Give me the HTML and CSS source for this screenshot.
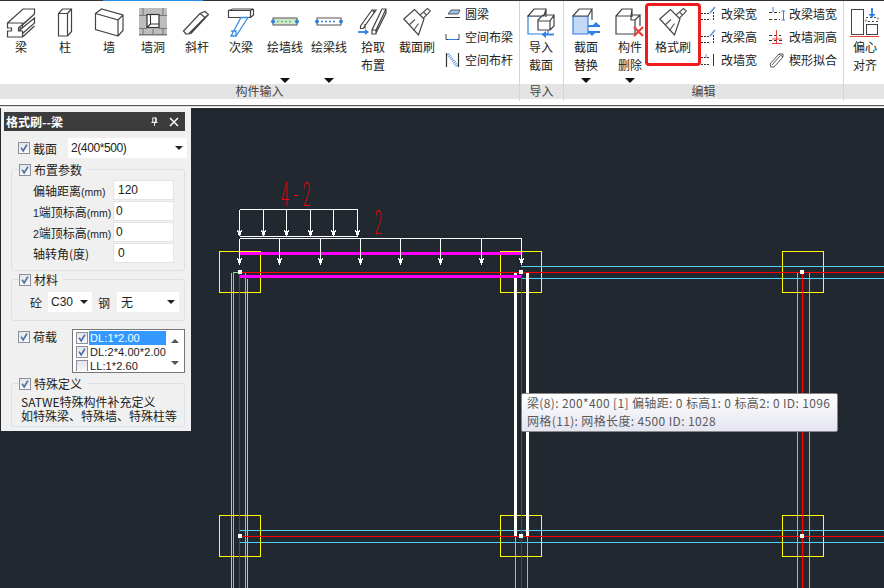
FILE: index.html
```html
<!DOCTYPE html>
<html lang="zh-CN">
<head>
<meta charset="utf-8">
<title>格式刷</title>
<link rel="stylesheet" href="styles.css">
</head>
<body>
<svg class="defs" width="0" height="0">
  <symbol id="brush" viewBox="0 0 28 28">
    <path d="M.8 11 11.500 1.500 21 11l-5.500 16z" fill="#fff" stroke="#444" stroke-width="1.200"/>
    <path d="M6 17 12 11.500M10.500 22.500l5-7M17 7l3.500-3 3 3-3 3M20.500 4l4-3.500 3 2.500-4 4" fill="none" stroke="#555" stroke-width="1.200"/>
  </symbol>
  <symbol id="check" viewBox="0 0 12 12">
    <path d="M2.500 5.500 5 9.500 9.500 2" fill="none" stroke="#4d6fa5" stroke-width="2"/>
  </symbol>
</svg>
<div class="app">
  <div class="topline"><span class="topline-blue"></span></div>
  <div class="ribbon">
    <section class="group g-input">
      <div class="tools">
        <div class="tool">
          <svg class="ic" viewBox="0 0 32 32"><path d="M2.500 17h15v5h-4v3h4v6h-15v-6h4v-3h-4zM2.500 17 18 3h11.500v5L17.500 19M29.500 8 13.500 22M13.500 25 29.500 12v5L17.500 27.500M17.500 31 29.500 20" fill="#fff" stroke="#444" stroke-width="1.200"/></svg>
          <span>梁</span>
        </div>
        <div class="tool">
          <svg class="ic" viewBox="0 0 32 32"><path d="M9.500 7.500h9v22.500h-9zM9.500 7.500l4-4.500h9v22.500l-4 4.500M18.500 7.500l4-4.500" fill="#fff" stroke="#444" stroke-width="1.200"/></svg>
          <span>柱</span>
        </div>
        <div class="tool">
          <svg class="ic" viewBox="0 0 32 32"><path d="M2.500 7.500 25 14v16L2.500 23.500zM2.500 7.500 8.500 3 30 9v15.500L25 30M25 14l5-5" fill="#fff" stroke="#444" stroke-width="1.200"/></svg>
          <span>墙</span>
        </div>
        <div class="tool">
          <svg class="ic" viewBox="0 0 32 32"><rect x="2" y="2" width="28" height="28" fill="#bdbdbd"/><path d="M2 9.500h8M22 9.500h8M2 22.500h8M22 22.500h8M2 28.500h28M6 2v7M26 2v7M6 23v6M16 23v6M26 23v6" stroke="#777" stroke-width="1"/><rect x="10" y="8.500" width="12" height="13" fill="#fff" stroke="#333" stroke-width="1.200"/><path d="M13.500 8.500v9.500h8.500M10 21.500l3.500-3.500" fill="none" stroke="#333" stroke-width="1.100"/></svg>
          <span>墙洞</span>
        </div>
        <div class="tool">
          <svg class="ic" viewBox="0 0 32 32"><path d="M2.500 25 19 7.500l5-2 3.500 3-17.500 19-5 .5zM19 7.500l5 4 3.500-3M24 11.500 7.500 28" fill="#fff" stroke="#444" stroke-width="1.200"/></svg>
          <span>斜杆</span>
        </div>
        <div class="tool">
          <svg class="ic" viewBox="0 0 32 32"><path d="M3.500 4.500h22v7h-22zM25.500 4.500l3-1.500H8l-4.500 1.500M28.500 3v6l-3 2.500" fill="#fff" stroke="#444" stroke-width="1.200"/><path d="M16 11.500h7L11 30H6zM6 25h5v5" fill="#fff" stroke="#3a8eea" stroke-width="1.300"/></svg>
          <span>次梁</span>
        </div>
        <div class="tool">
          <svg class="ic" viewBox="0 0 32 32"><rect x="4" y="12" width="24" height="7" fill="#cfe9cf" stroke="#555"/><path d="M8 15.500h16" stroke="#6fbf6f" stroke-width="1.500" stroke-dasharray="2 2"/><circle cx="4" cy="15.500" r="2" fill="#2f7fe6"/><circle cx="28" cy="15.500" r="2" fill="#2f7fe6"/></svg>
          <span>绘墙线</span>
          <i class="drop"></i>
        </div>
        <div class="tool">
          <svg class="ic" viewBox="0 0 32 32"><rect x="4" y="12" width="24" height="7" fill="#fff" stroke="#555"/><path d="M8 15.500h16" stroke="#2f7fe6" stroke-width="1.500" stroke-dasharray="2 2"/><circle cx="4" cy="15.500" r="2" fill="#2f7fe6"/><circle cx="28" cy="15.500" r="2" fill="#2f7fe6"/></svg>
          <span>绘梁线</span>
          <i class="drop"></i>
        </div>
        <div class="tool tall">
          <svg class="ic" viewBox="0 0 32 32"><path d="M3.500 20 15 4h4L6 22.500H3.500zM15 4l3 3M8 22.500V18M19 27l10-20V3h-4L15 24v4h4zM15 24h4v4M19 24 29 3" fill="#fff" stroke="#444" stroke-width="1.200"/><path d="M1 26h9" stroke="#2f7fe6" stroke-width="1.800"/><path d="M8 23l4 3-4 3z" fill="#2f7fe6"/></svg>
          <span>拾取<br>布置</span>
        </div>
        <div class="tool">
          <svg class="ic brush" viewBox="0 0 28 28"><use href="#brush"/></svg>
          <span>截面刷</span>
        </div>
        <div class="smalls s1">
          <div class="small"><svg viewBox="0 0 16 12"><path d="M3 6 6 2h9l-2 4z" fill="#9fc4ea" stroke="#555"/><path d="M0 9.500h15" stroke="#333"/></svg><span>圆梁</span></div>
          <div class="small"><svg viewBox="0 0 16 12"><path d="M1 3v5.500h13V3" fill="none" stroke="#444"/><path d="M3 8.500h9" stroke="#2f7fe6"/></svg><span>空间布梁</span></div>
          <div class="small"><svg viewBox="0 0 16 16"><path d="M1.500 1v14M13.500 1v14" stroke="#333" stroke-width="1.200"/><path d="M3 2l9 12" stroke="#5a94e0" stroke-width="3" stroke-dasharray="1 1"/></svg><span>空间布杆</span></div>
        </div>
      </div>
      <div class="band">构件输入</div>
    </section>
    <section class="group g-import">
      <div class="tools">
        <div class="tool tall">
          <svg class="ic" viewBox="0 0 32 32"><path d="M3 10h17v3l3 0v15H3z" fill="#fff" stroke="#2f7fe6" stroke-width="1.200"/><path d="M3 10 9 3h12l-2 7zM21 3v8M13 14l5-5h11l-4 6v9H13zM25 15H13M29 9v11l-4 4" fill="#fff" stroke="#444" stroke-width="1.200"/><path d="M19 28.500h10" stroke="#2f7fe6" stroke-width="1.800"/><path d="M21 25l-4.500 3.500L21 32z" fill="#2f7fe6"/></svg>
          <span>导入<br>截面</span>
        </div>
      </div>
      <div class="band">导入</div>
    </section>
    <section class="group g-edit">
      <div class="tools">
        <div class="tool tall">
          <svg class="ic" viewBox="0 0 32 32"><path d="M3 10h15v18H3z" fill="#c3d9f5" stroke="#2f7fe6" stroke-width="1.200"/><path d="M3 10 9 3h13l-4 7zM22 3v11" fill="#fff" stroke="#444" stroke-width="1.200"/><path d="M18 20h12M18 26h12" stroke="#2f7fe6" stroke-width="1.800"/><path d="M26 16l4 4h-8zM22 30l-4-4h8z" fill="#2f7fe6"/></svg>
          <span>截面<br>替换</span>
          <i class="drop"></i>
        </div>
        <div class="tool tall">
          <svg class="ic" viewBox="0 0 32 32"><path d="M2 10h15v4h4v14H2zM2 10l6-7h10l-1 7M18 3v8M21 14l5-5h-9M26 9v11" fill="#fff" stroke="#444" stroke-width="1.200"/><path d="M20 21l9 9M29 21l-9 9" stroke="#e8413c" stroke-width="2.200"/></svg>
          <span>构件<br>删除</span>
          <i class="drop"></i>
        </div>
        <div class="tool highlight">
          <svg class="ic brush" viewBox="0 0 28 28"><use href="#brush"/></svg>
          <span>格式刷</span>
        </div>
        <div class="smalls s2">
          <div class="small"><svg viewBox="0 0 16 16"><path d="M0 7.500h9M0 13.500h9M12.500 6v9" stroke="#333" stroke-dasharray="2 1"/><path d="M9 7l5-6" stroke="#5a94e0" stroke-width="1.500"/></svg><span>改梁宽</span></div>
          <div class="small"><svg viewBox="0 0 16 16"><path d="M0 7.500h9M0 13.500h9M12.500 6v9" stroke="#333" stroke-dasharray="2 1"/><path d="M9 7l5-6" stroke="#5a94e0" stroke-width="1.500"/></svg><span>改梁高</span></div>
          <div class="small"><svg viewBox="0 0 16 16"><path d="M0 5.500h9M0 12.500h9" stroke="#333" stroke-dasharray="2 1"/><path d="M12.500 2v12" stroke="#333"/><path d="M5 2v4" stroke="#5a94e0"/></svg><span>改墙宽</span></div>
        </div>
        <div class="smalls s3">
          <div class="small"><svg viewBox="0 0 16 16"><path d="M0 6.500h11M0 13.500h11" stroke="#333" stroke-dasharray="3 2"/><path d="M4 1v5M14.500 5v9M12.500 5h4M12.500 14h4" stroke="#3a7fd5"/></svg><span>改梁墙宽</span></div>
          <div class="small"><svg viewBox="0 0 16 16"><path d="M0 6.500h12M0 11.500h14" stroke="#333" stroke-dasharray="3 2"/><path d="M7.500 1v13M3 14.500h10M3 10h10" stroke="#e8413c"/></svg><span>改墙洞高</span></div>
          <div class="small"><svg viewBox="0 0 16 16"><path d="M1 12 10 2h4v3L5 15H2zM10 2l4 3M3 13l8-9" fill="none" stroke="#555"/></svg><span>楔形拟合</span></div>
        </div>
      </div>
      <div class="band">编辑</div>
    </section>
    <section class="group g-more">
      <div class="tools">
        <div class="tool tall">
          <svg class="ic" viewBox="0 0 32 32"><rect x="2.500" y="3.500" width="12" height="25" fill="#fff" stroke="#444"/><rect x="17.500" y="18.500" width="11" height="10" fill="#fff" stroke="#444"/><path d="M17 11.500h12v4H17z" fill="none" stroke="#444" stroke-dasharray="2 2"/><path d="M23 2v8" stroke="#2f7fe6" stroke-width="1.800"/><path d="M19.500 8h7L23 12z" fill="#2f7fe6"/><path d="M1 30.500h29" stroke="#e8413c"/></svg>
          <span>偏心<br>对齐</span>
        </div>
      </div>
      <div class="band"></div>
    </section>
  </div>
  <div class="divider"></div>
  <main class="canvas">
    <svg class="drawing" viewBox="0 108 884 480" width="884" height="480">
      <g class="cad-cyan">
        <path d="M521 266.500H884M521 278.500H884M240 530.500H884M240 542.500H884"/>
        <path d="M233.500 273V588M245.500 273V588M515.500 536V588M527.500 536V588M797.500 272V588M809.500 272V588"/>
      </g>
      <path class="cad-green" d="M231.500 588V273.500Q232 272.500 240 272.500M247.500 279V588"/>
      <g class="cad-yellow">
        <rect x="219.500" y="251.500" width="41" height="41"/><rect x="500.500" y="251.500" width="41" height="41"/><rect x="782.500" y="251.500" width="41" height="41"/>
        <rect x="219.500" y="515.500" width="41" height="41"/><rect x="500.500" y="515.500" width="41" height="41"/><rect x="782.500" y="515.500" width="41" height="41"/>
      </g>
      <g class="cad-white-thick">
        <rect x="514" y="273" width="3" height="264"/><rect x="526" y="273" width="3" height="264"/>
      </g>
      <g class="cad-magenta">
        <rect x="240" y="252" width="281" height="3"/><rect x="240" y="275" width="281" height="3"/>
      </g>
      <path class="cad-red" d="M240 272.500H884M240 536.500H884M239.500 272V588M521.500 272V588"/>
      <path class="cad-red-2" d="M802.500 272V588"/>
      <path class="cad-white" d="M239.500 209.500H357.500M239.500 236.500H357.500M239.500 209.500V232M263.500 209.500V232M286.500 209.500V232M310.500 209.500V232M333.500 209.500V232M357.500 209.500V232M239.500 238.500H521.500M239.500 238.500V262M279.500 238.500V262M320.500 238.500V262M360.500 238.500V262M400.500 238.500V262M440.500 238.500V262M481.500 238.500V262M521.500 238.500V262"/>
      <g class="cad-head">
        <path d="M237 230l2.500 2 2.500-2-1 4-1.500 2-1.500-2z"/><path d="M261 230l2.500 2 2.500-2-1 4-1.500 2-1.500-2z"/><path d="M284 230l2.500 2 2.500-2-1 4-1.500 2-1.500-2z"/><path d="M308 230l2.500 2 2.500-2-1 4-1.500 2-1.500-2z"/><path d="M331 230l2.500 2 2.500-2-1 4-1.500 2-1.500-2z"/><path d="M355 230l2.500 2 2.500-2-1 4-1.500 2-1.500-2z"/>
        <path d="M237 258l2.500 2 2.500-2-1 4-1.500 3-1.500-3z"/><path d="M277 258l2.500 2 2.500-2-1 4-1.500 3-1.500-3z"/><path d="M318 258l2.500 2 2.500-2-1 4-1.500 3-1.500-3z"/><path d="M358 258l2.500 2 2.500-2-1 4-1.500 3-1.500-3z"/><path d="M398 258l2.500 2 2.500-2-1 4-1.500 3-1.500-3z"/><path d="M438 258l2.500 2 2.500-2-1 4-1.500 3-1.500-3z"/><path d="M479 258l2.500 2 2.500-2-1 4-1.500 3-1.500-3z"/><path d="M519 258l2.500 2 2.500-2-1 4-1.500 3-1.500-3z"/>
      </g>
      <g class="cad-node">
        <rect x="238" y="270" width="4" height="4"/><rect x="519" y="270" width="4" height="4"/><rect x="800" y="270" width="4" height="4"/>
        <rect x="238" y="534" width="4" height="4"/><rect x="519" y="534" width="4" height="4"/><rect x="800" y="534" width="4" height="4"/>
      </g>
      <text class="cad-text spaced" transform="translate(281 206) scale(.42 1)">4-2</text>
      <text class="cad-text" transform="translate(374.500 234) scale(.42 1)">2</text>
    </svg>

    <aside class="panel">
      <header class="panel-title">
        <strong>格式刷--梁</strong>
        <svg class="pin" viewBox="0 0 10 10"><path d="M3 1h4v5H3zM1.500 6h7M5 6v4M6 1v5" fill="none" stroke="#fff"/></svg>
        <svg class="close" viewBox="0 0 10 10"><path d="M1 1l8 8M9 1 1 9" stroke="#fff" stroke-width="1.500"/></svg>
      </header>
      <div class="row-section">
        <label class="chk-label"><i class="chk"><svg viewBox="0 0 12 12"><use href="#check"/></svg></i>截面</label>
        <div class="select sel-section">2(400*500)</div>
      </div>
      <div class="box box-layout">
        <label class="chk-label legend"><i class="chk"><svg viewBox="0 0 12 12"><use href="#check"/></svg></i>布置参数</label>
        <div class="field"><span>偏轴距离<small>(mm)</small></span><div class="input first">120</div></div>
        <div class="field"><span><small>1</small>端顶标高<small>(mm)</small></span><div class="input">0</div></div>
        <div class="field"><span><small>2</small>端顶标高<small>(mm)</small></span><div class="input">0</div></div>
        <div class="field"><span>轴转角(度)</span><div class="input first">0</div></div>
      </div>
      <div class="box box-material">
        <label class="chk-label legend"><i class="chk"><svg viewBox="0 0 12 12"><use href="#check"/></svg></i>材料</label>
        <div class="material">
          <span>砼</span><div class="select sel-c">C30</div>
          <span>钢</span><div class="select sel-s">无</div>
        </div>
      </div>
      <div class="row-load">
        <label class="chk-label"><i class="chk"><svg viewBox="0 0 12 12"><use href="#check"/></svg></i>荷载</label>
        <div class="list">
          <div class="list-rows">
            <div class="li sel"><i class="chk mini"><svg viewBox="0 0 12 12"><use href="#check"/></svg></i><span>DL:1*2.00</span></div>
            <div class="li"><i class="chk mini"><svg viewBox="0 0 12 12"><use href="#check"/></svg></i><span>DL:2*4.00*2.00</span></div>
            <div class="li"><i class="chk mini off"></i><span>LL:1*2.60</span></div>
          </div>
          <div class="scroll"><i class="up"></i><i class="down"></i></div>
        </div>
      </div>
      <div class="box box-special">
        <label class="chk-label legend"><i class="chk"><svg viewBox="0 0 12 12"><use href="#check"/></svg></i>特殊定义</label>
        <p>SATWE特殊构件补充定义<br>如特殊梁、特殊墙、特殊柱等</p>
      </div>
    </aside>

    <div class="tip">
      <div>梁(8): 200*400 [1] 偏轴距: 0 标高1: 0 标高2: 0 ID: 1096</div>
      <div>网格(11): 网格长度: 4500 ID: 1028</div>
    </div>
  </main>
</div>
</body>
</html>
```
FILE: styles.css
```css
* { box-sizing: border-box; }
html, body { margin: 0; padding: 0; }
body {
  width: 884px;
  height: 588px;
  overflow: hidden;
  font-family: "Noto Sans CJK SC", "Liberation Sans", sans-serif;
  font-size: 12px;
  color: #222;
  background: #fff;
}
.defs { display: block; height: 0; width: 0; }
.app { display: flex; flex-direction: column; height: 588px; }

.topline { height: 1px; background: #333; flex: none; display: flex; padding-left: 103px; }
.topline-blue { width: 100px; height: 1px; background: #2b8fe8; }

.ribbon { height: 104px; flex: none; display: flex; background: #fff; }
.group { display: flex; flex-direction: column; flex: none; border-right: 1px solid #d5d5d5; margin-bottom: 4px; padding-top: 3px; }
.g-input { width: 520px; }
.g-import { width: 44px; }
.g-edit { width: 280px; }
.g-more { flex: 1; border-right: 0; }
.tools { display: flex; height: 80px; flex: none; }
.band {
  height: 15px;
  background: #e4e4e4;
  color: #444;
  text-align: center;
  line-height: 14px;
  font-size: 12px;
}
.g-input .tools { margin-left: -1px; }
.g-more .tools { margin-left: -1px; }
.tool {
  width: 44px;
  flex: none;
  display: flex;
  flex-direction: column;
  align-items: center;
  padding-top: 2px;
  position: relative;
  line-height: 18px;
  text-align: center;
  color: #222;
  white-space: nowrap;
}
.ic { width: 32px; height: 32px; display: block; flex: none; }
.ic.brush { width: 28px; height: 28px; margin: 2px 2px 2px; }
.drop {
  position: absolute;
  top: 74px;
  left: 17px;
  width: 0; height: 0;
  border-left: 5px solid transparent;
  border-right: 5px solid transparent;
  border-top: 5px solid #111;
}
.g-import .tool { margin-left: -1px; }
.highlight {
  width: 56px;
  height: 63px;
  padding-top: 0;
  border: 3px solid #ef1c1c;
  border-radius: 4px;
  margin: -1px 0 0 -7px;
}
.smalls { display: flex; flex-direction: column; margin-top: -2px; flex: none; }
.s1 { margin-left: 6px; }
.s2 { width: 68px; }
.s3 { width: 74px; }
.small { display: flex; align-items: center; height: 23px; gap: 4px; white-space: nowrap; }
.small svg { width: 16px; height: 16px; flex: none; }

.divider { height: 3px; flex: none; background: linear-gradient(#5c5c5c 0 1px, #d8d8d8 1px 2px, #fff 2px); }
.canvas { position: relative; flex: 1; background: #212830; overflow: hidden; }
.drawing { position: absolute; left: 0; top: 0; display: block; }
.drawing path, .drawing rect { shape-rendering: crispEdges; }
.cad-cyan path { stroke: #4fd0ff; fill: none; }
.cad-green { stroke: #7fe88c; fill: none; }
.cad-yellow rect { fill: none; stroke: #ffff00; }
.cad-white-thick rect, .cad-node rect { fill: #fff; }
.cad-magenta rect { fill: #ff00ff; }
.cad-red { stroke: #ff0000; fill: none; }
.cad-red-2 { stroke: #ff0000; fill: none; }
.cad-white { stroke: #fff; fill: none; }
.cad-head path { fill: #fff; }
.cad-text {
  font-family: Roboto, "Liberation Sans", sans-serif;
  font-weight: 100;
  font-size: 33px;
  fill: #ff0000;
  stroke: #ff0000;
  stroke-width: .25;
}
.spaced { letter-spacing: 12px; }

.panel {
  position: absolute;
  left: 1px;
  top: 0;
  width: 190px;
  height: 323px;
  background: #f0f0f0;
  padding: 4px 5px 0 3px;
  display: flex;
  flex-direction: column;
  color: #222;
}
.panel-title {
  height: 19px;
  flex: none;
  background: #3c3c3c;
  color: #fff;
  display: flex;
  align-items: center;
  padding: 0 6px 0 2px;
  line-height: 19px;
  margin-right: 1px;
}
.panel-title strong { flex: 1; font-weight: 700; font-size: 12px; }
.pin { width: 9px; height: 9px; margin-right: 10px; }
.close { width: 10px; height: 10px; }
.row-section { display: flex; height: 20px; margin-top: 7px; flex: none; align-items: center; justify-content: space-between; padding-left: 14px; margin-right: -1px; }
.chk-label { display: flex; align-items: center; gap: 3px; font-size: 12px; line-height: 13px; }
.chk {
  width: 12px; height: 12px; flex: none;
  display: block;
  border: 1px solid #8a8f99;
  background: linear-gradient(#e3e6ea, #f8f8f8);
}
.chk svg { display: block; width: 10px; height: 10px; }
.select {
  background: #fff;
  position: relative;
  height: 20px;
  line-height: 20px;
  padding-left: 4px;
}
.select::after {
  content: "";
  position: absolute;
  right: 4px; top: 8px;
  border-left: 4px solid transparent;
  border-right: 4px solid transparent;
  border-top: 4px solid #222;
}
.sel-section { width: 119px; font-family: "Liberation Sans", sans-serif; letter-spacing: -.4px; padding-left: 3px; }
.box {
  border: 1px solid #dbe1e8;
  border-radius: 3px;
  margin-left: 7px;
  margin-right: 1px;
  flex: none;
}
.legend {
  margin: -7px 0 0 7px;
  width: fit-content;
  background: #f0f0f0;
  padding-right: 5px;
}
.box-layout { margin-top: 11px; height: 102px; }
.field { display: flex; height: 20px; margin-bottom: 1px; align-items: center; justify-content: space-between; padding-left: 21px; padding-right: 10px; white-space: nowrap; }
.box-layout .legend { margin-bottom: 4px; }
.field small { font-size: 10.500px; font-family: "Liberation Sans", sans-serif; }
.input {
  width: 61px; height: 20px;
  background: #fff;
  border: 1px solid #e4e4e4;
  line-height: 18px;
  padding-left: 2px;
  font-family: "Liberation Sans", sans-serif;
}
.input.first { padding-left: 4px; }
.box-material { margin-top: 8px; height: 42px; }
.material { display: flex; align-items: center; margin-top: 6px; padding-left: 18px; }
.sel-c { width: 44px; margin: 0 6px; font-family: "Liberation Sans", sans-serif; padding-left: 3px; }
.sel-s { width: 62px; margin-left: 7px; }
.row-load { display: flex; height: 44px; flex: none; margin-top: 8px; justify-content: space-between; padding-left: 14px; margin-right: 1px; }
.row-load .chk-label { align-self: flex-start; margin-top: 1px; }
.list { width: 113px; height: 44px; border: 1px solid #777; background: #fff; display: flex; padding: 1px; overflow: hidden; }
.list-rows { flex: 1; overflow: hidden; min-width: 0; }
.li { display: flex; height: 14px; gap: 1px; align-items: center; white-space: nowrap; font-family: "Liberation Sans", sans-serif; font-size: 11px; letter-spacing: .1px; }
.li span { flex: 1; height: 14px; line-height: 14px; padding-left: 1px; overflow: hidden; }
.li.sel span { background: #3399ff; color: #fff; }
.chk.mini { width: 12px; height: 12px; margin-left: 2px; }
.scroll { width: 17px; flex: none; display: flex; flex-direction: column; align-items: center; justify-content: space-between; padding: 8px 0 6px; }
.up { border-left: 4px solid transparent; border-right: 4px solid transparent; border-bottom: 4px solid #555; }
.down { border-left: 4px solid transparent; border-right: 4px solid transparent; border-top: 4px solid #555; }
.box-special { margin-top: 10px; height: 44px; }
.box-special p { margin: 5px 0 0 9px; font-size: 12px; line-height: 14px; white-space: nowrap; }

.tip {
  position: absolute;
  left: 521px;
  top: 285px;
  width: 317px;
  height: 39px;
  border: 1px solid #888;
  border-radius: 2px;
  padding: 0 0 0 5px;
  background: linear-gradient(#fff, #e4e5f0);
  color: #5a5a5a;
  font-size: 12px;
  letter-spacing: .36px;
  line-height: 17.500px;
  white-space: nowrap;
  box-shadow: 0 0 1px rgba(0,0,0,.3);
}
```
